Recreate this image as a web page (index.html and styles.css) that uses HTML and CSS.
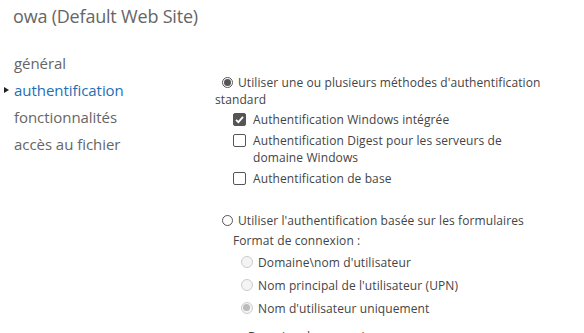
FILE: index.html
```html
<!DOCTYPE html>
<html lang="fr">
<head>
<meta charset="utf-8">
<title>owa</title>
<link rel="stylesheet" href="styles.css">
</head>
<body>
<h1 class="title">owa (Default Web Site)</h1>
<div class="layout">
  <nav class="nav">
    <div class="nav-item">général</div>
    <div class="nav-item active"><span class="caret"></span>authentification</div>
    <div class="nav-item">fonctionnalités</div>
    <div class="nav-item">accès au fichier</div>
  </nav>
  <main class="content">
    <div class="radio-line"><span class="radio checked"></span>Utiliser une ou plusieurs méthodes d'authentification standard</div>
    <div class="checks">
      <div class="check-row"><span class="box checked"><svg viewBox="0 0 13 13" width="13" height="13"><path d="M3 6.8 L5.4 9.2 L10 3.8" fill="none" stroke="#fff" stroke-width="1.8"/></svg></span><span class="check-text">Authentification Windows intégrée</span></div>
      <div class="check-row"><span class="box"></span><span class="check-text">Authentification Digest pour les serveurs de domaine Windows</span></div>
      <div class="check-row"><span class="box"></span><span class="check-text">Authentification de base</span></div>
    </div>
    <div class="radio-line second"><span class="radio"></span>Utiliser l'authentification basée sur les formulaires</div>
    <div class="format">Format de connexion :</div>
    <div class="subradios">
      <div class="sub-row"><span class="radio disabled"></span>Domaine\nom d'utilisateur</div>
      <div class="sub-row"><span class="radio disabled"></span>Nom principal de l'utilisateur (UPN)</div>
      <div class="sub-row"><span class="radio disabled checked"></span>Nom d'utilisateur uniquement</div>
    </div>
    <div class="domain">Domaine de connexion :</div>
  </main>
</div>
</body>
</html>
```
FILE: styles.css
```css
html, body {
  margin: 0;
  padding: 0;
  background: #fff;
  overflow: hidden;
}
body {
  font-family: "Open Sans", "Noto Sans", sans-serif;
  color: #444;
  width: 584px;
  height: 333px;
}
.title {
  margin: 0;
  padding: 4px 0 0 13px;
  font-size: 18px;
  font-weight: 400;
  color: #666;
  line-height: 24px;
  letter-spacing: -0.2px;
}
.layout {
  display: flex;
  padding-top: 22px;
}
.nav {
  width: 215px;
  flex: none;
}
.nav-item {
  position: relative;
  padding-left: 14px;
  font-size: 15px;
  line-height: 27px;
  color: #666;
  letter-spacing: -0.05px;
}
.nav-item.active {
  color: #1f6fb5;
}
.caret {
  position: absolute;
  left: 4px;
  top: 10px;
  width: 0;
  height: 0;
  border-top: 3.5px solid transparent;
  border-bottom: 3.5px solid transparent;
  border-left: 5px solid #222;
}
.content {
  flex: 1;
  font-size: 12px;
  line-height: 17px;
  padding-top: 24px;
  letter-spacing: 0.1px;
}
.radio-line {
  padding-right: 30px;
}
.radio {
  display: inline-block;
  box-sizing: border-box;
  width: 11px;
  height: 11px;
  border: 1px solid #555;
  border-radius: 50%;
  vertical-align: -1px;
  margin: 0 5px 0 7px;
  position: relative;
}
.radio.checked::after {
  content: "";
  position: absolute;
  left: 1px;
  top: 1px;
  width: 7px;
  height: 7px;
  border-radius: 50%;
  background: #555;
}
.radio.disabled {
  border-color: #ccc;
  background: #f4f4f4;
}
.radio.disabled.checked::after {
  background: #bbb;
}
.checks {
  padding-left: 18px;
  padding-top: 3px;
}
.check-row {
  display: flex;
  align-items: flex-start;
  margin-bottom: 4px;
}
.box {
  flex: none;
  box-sizing: border-box;
  width: 13px;
  height: 13px;
  border: 1px solid #555;
  border-radius: 2px;
  margin-top: 2px;
  margin-right: 7px;
  display: flex;
}
.box.checked {
  background: #555;
  border-color: #555;
}
.box svg {
  margin: -1px;
}
.check-text {
  width: 262px;
}
.second {
  margin-top: 25px;
}
.format {
  padding-left: 18px;
  margin-top: 3px;
}
.subradios {
  padding-left: 19px;
  padding-top: 5px;
}
.subradios .radio {
  margin-left: 7px;
  width: 12px;
  height: 12px;
}
.sub-row {
  margin-bottom: 6px;
}
.domain {
  padding-left: 33px;
  margin-top: 11px;
}
```
